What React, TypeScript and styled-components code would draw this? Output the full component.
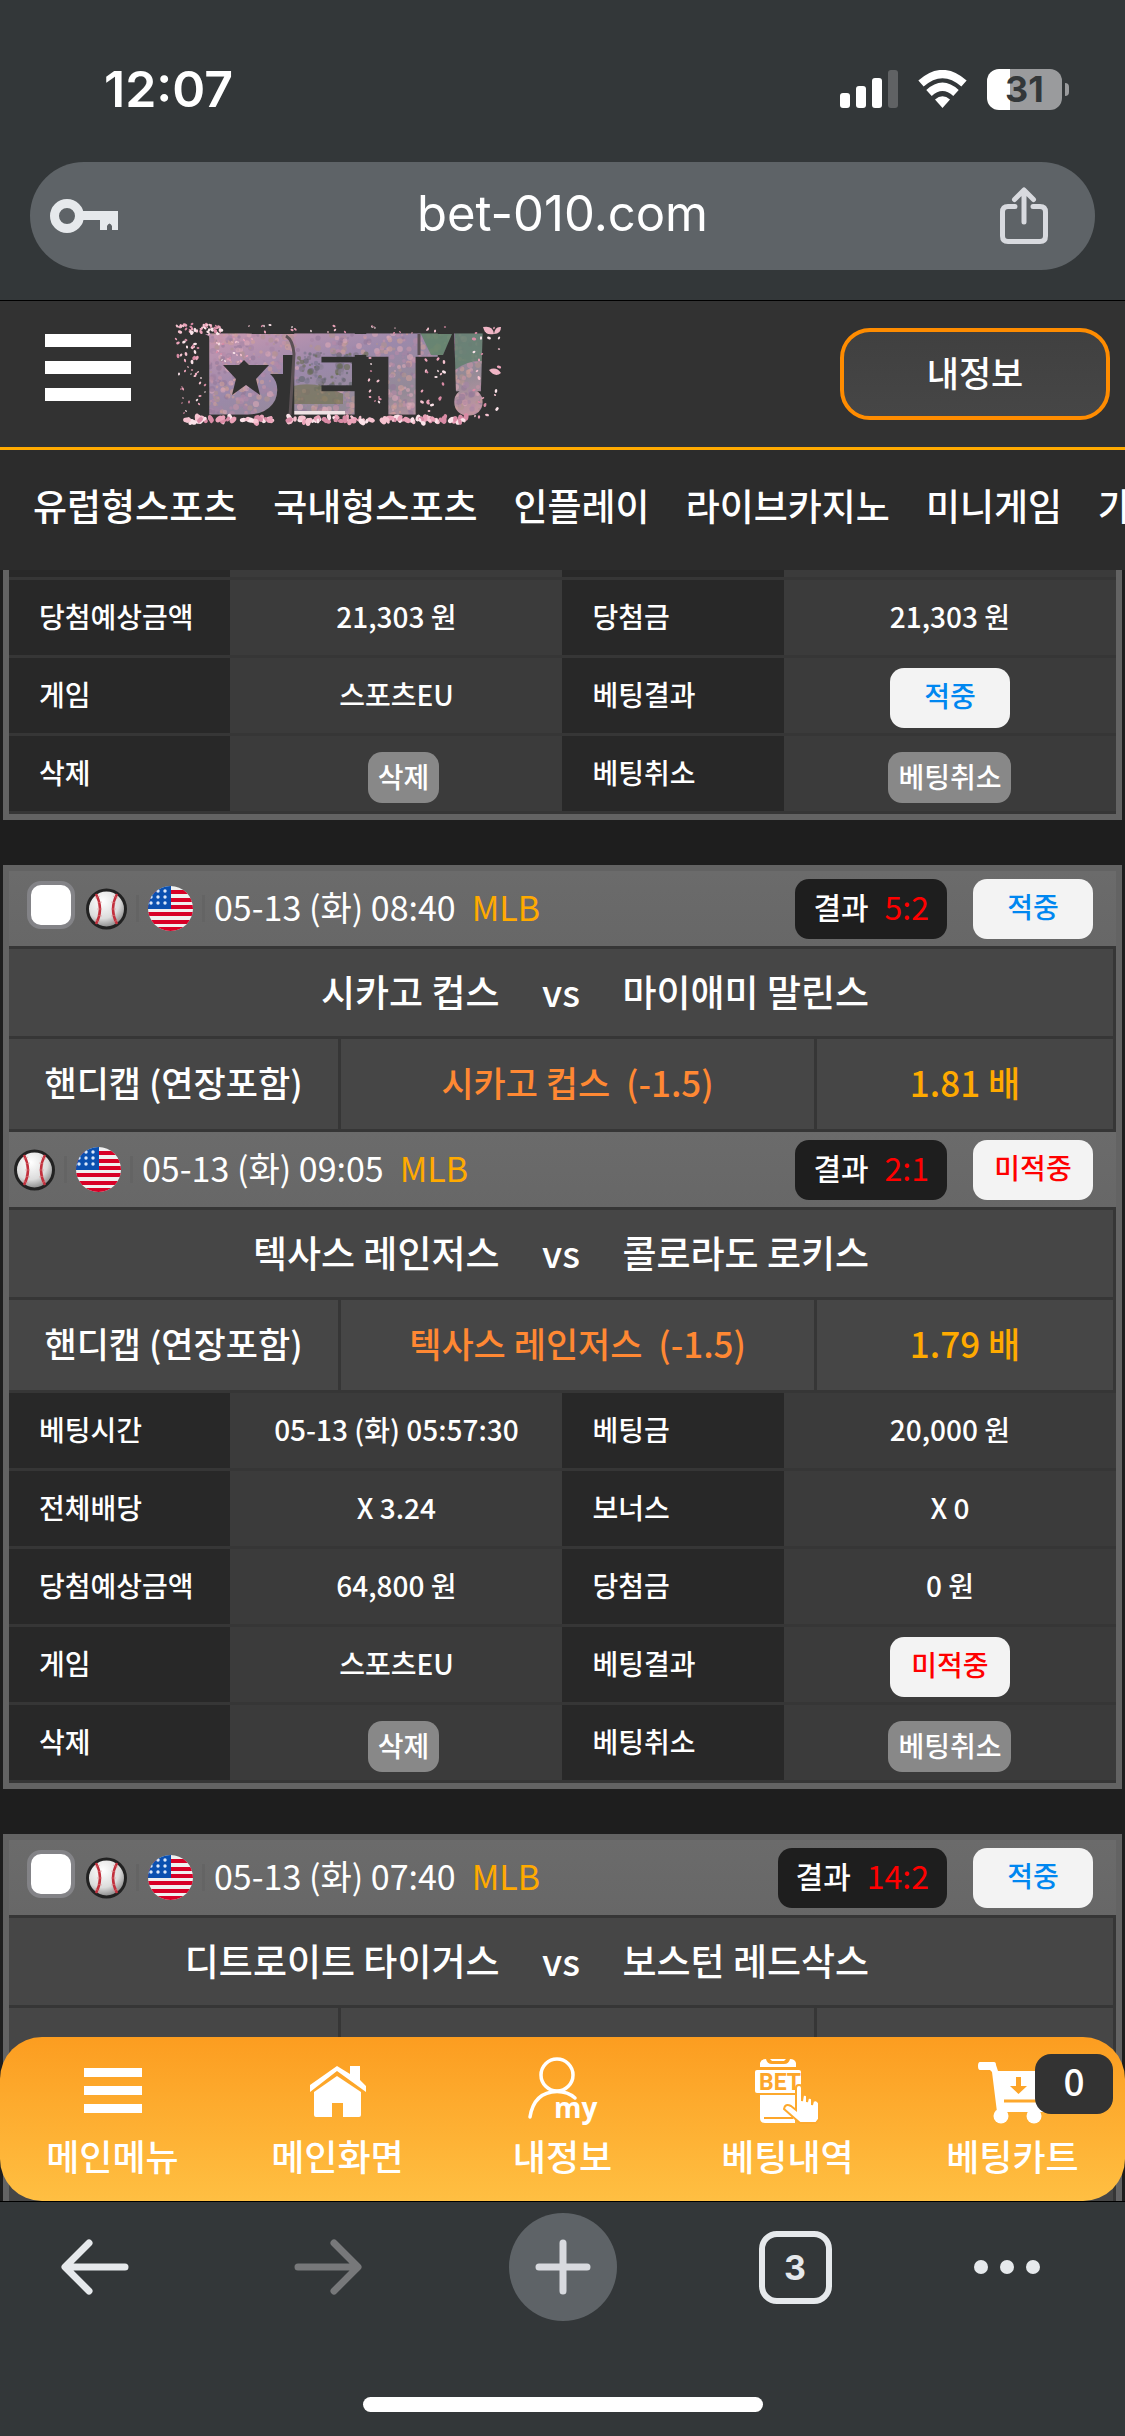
import React from "react";
import styled, { createGlobalStyle } from "styled-components";

const GlobalStyle = createGlobalStyle`
  *, *::before, *::after { box-sizing: border-box; }
  html, body, #root { height: 100%; }
  body {
    margin: 0;
    background: #333739;
    color: #fff;
    font-family: "Noto Sans CJK KR", sans-serif;
    font-weight: 500;
  }
  button, input { font: inherit; color: inherit; }
  button { padding: 0; border: 0; background: none; cursor: pointer; }
  a { color: inherit; text-decoration: none; }
  svg { display: block; flex: none; }
`;

/* ---------- frame ---------- */

const Screen = styled.div`
  display: flex;
  flex-direction: column;
  height: 100vh;
  min-height: 1200px;
  overflow: hidden;
  background: #1e1e1e;
`;

const BrowserTop = styled.header`
  flex: none;
  background: #333739;
  border-bottom: 1px solid #000;
  padding-bottom: 30px;
`;

const StatusBar = styled.div`
  display: flex;
  align-items: center;
  justify-content: space-between;
  height: 162px;
  padding: 16px 56px 0 104px;
  font-family: Inter, sans-serif;
`;

const Clock = styled.time`
  font-size: 50px;
  line-height: 60px;
  font-weight: 600;
`;

const StatusIcons = styled.div`
  display: flex;
  align-items: center;
  gap: 19px;
`;

const Battery = styled.div`
  display: flex;
  align-items: center;
  gap: 3px;
`;

const BatteryBody = styled.span`
  width: 75px;
  height: 41px;
  border-radius: 12px;
  background: linear-gradient(90deg, #fff 31%, #9a9b9d 31%);
  color: #333739;
  font-size: 36px;
  line-height: 41px;
  font-weight: 700;
  text-align: center;
`;

const BatteryNub = styled.span`
  width: 4px;
  height: 13px;
  border-radius: 0 4px 4px 0;
  background: #9a9b9d;
`;

const AddressBar = styled.div`
  display: grid;
  grid-template-columns: 84px 1fr 84px;
  align-items: center;
  height: 108px;
  margin: 0 30px;
  padding: 0 18px;
  border-radius: 54px;
  background: #5e6367;
`;

const AddressInput = styled.input`
  width: 100%;
  padding: 0 0 4px;
  border: 0;
  outline: 0;
  background: none;
  font-family: Inter, sans-serif;
  font-size: 49px;
  line-height: 60px;
  font-weight: 400;
  text-align: center;
`;

const ShareButton = styled.button`
  justify-self: start;
  padding-left: 6px;
`;

const Page = styled.div`
  position: relative;
  flex: 1;
  min-height: 0;
  overflow: hidden;
  display: flex;
  flex-direction: column;
`;

/* ---------- site header ---------- */

const SiteHeader = styled.div`
  flex: none;
  display: flex;
  align-items: center;
  height: 149px;
  padding: 0 15px 0 45px;
  background: #323232;
  border-bottom: 3px solid #ffaa00;
`;

const HeaderMenuButton = styled.button`
  padding-bottom: 14px;
`;

const LogoLink = styled.a`
  margin-left: 34px;
`;

const InfoButton = styled.button`
  width: 270px;
  height: 92px;
  margin-left: auto;
  padding-bottom: 4px;
  border: 4px solid #ff8c00;
  border-radius: 30px;
  background: linear-gradient(#404040, #464646);
  font-size: 35px;
  line-height: 40px;
`;

const NavBar = styled.nav`
  flex: none;
  display: flex;
  align-items: center;
  gap: 36px;
  height: 120px;
  padding: 0 0 10px 33px;
  overflow: hidden;
  background: #2c2c2c;
  font-size: 37px;
  line-height: 48px;
  white-space: nowrap;
`;

/* ---------- bet cards ---------- */

const CardList = styled.main`
  flex: 1;
  min-height: 0;
  display: flex;
  flex-direction: column;
  gap: 45px;
  padding: 0 3px;
  overflow: hidden;
`;

const Card = styled.article<{ $cut?: boolean }>`
  flex: none;
  border: 6px solid #636363;
  border-top-width: ${(p) => (p.$cut ? 0 : 6)}px;
  background: #464646;
`;

const GameHead = styled.div<{ $select?: boolean }>`
  display: flex;
  align-items: center;
  height: 78px;
  padding: 0 23px 0 ${(p) => (p.$select ? 18 : 5)}px;
  border-bottom: 3px solid #363636;
  background: linear-gradient(#6b6b6b, #676767);
  font-size: 34px;
  line-height: 48px;
`;

const SelectBox = styled.input`
  appearance: none;
  width: 48px;
  height: 48px;
  margin: 0 11px 8px 0;
  border: 4px solid #838387;
  border-radius: 14px;
  background: #fff;
`;

const Separator = styled.span`
  width: 3px;
  height: 27px;
  margin: 0 9px;
  background: #646464;
`;

const StartTime = styled.time`
  padding-bottom: 4px;
  font-weight: 400;
`;

const League = styled.span`
  margin-left: 16px;
  padding-bottom: 4px;
  color: #ffaa00;
  font-weight: 400;
`;

const Score = styled.span`
  display: flex;
  gap: 16px;
  height: 60px;
  margin-left: auto;
  padding: 3px 18px 0;
  border-radius: 14px;
  background: #1e1e1e;
  font-size: 30px;
`;

const ScoreValue = styled.strong`
  color: #ff0000;
  font-size: 32px;
  font-weight: 400;
`;

const Result = styled.span<{ $won: boolean }>`
  display: inline-block;
  width: 120px;
  height: 60px;
  border-radius: 14px;
  background: #f3f3f3;
  color: ${(p) => (p.$won ? "#0087f0" : "#ff0000")};
  font-size: 28px;
  line-height: 55px;
  text-align: center;
  vertical-align: middle;

  ${Score} + & { margin-left: 26px; }
`;

const Teams = styled.div`
  display: grid;
  grid-template-columns: 1fr 123px 1fr;
  align-items: center;
  height: 90px;
  padding-bottom: 4px;
  border-right: 3px solid #363636;
  border-bottom: 3px solid #363636;
  font-size: 37px;
  line-height: 48px;
  text-align: center;
`;

const Home = styled.span`
  text-align: right;
`;

const Away = styled.span`
  text-align: left;
`;

const PickRow = styled.div`
  display: grid;
  grid-template-columns: 30% 43% 27%;
  height: 93px;
  border-bottom: 3px solid #363636;
  font-size: 35px;
  line-height: 86px;
  text-align: center;
  white-space: nowrap;
`;

const PickCell = styled.div<{ $color?: string }>`
  border-right: 3px solid #363636;
  color: ${(p) => p.$color ?? "#fff"};
`;

const OpenRow = styled(PickRow)`
  height: 220px;
`;

const Details = styled.table`
  width: 100%;
  table-layout: fixed;
  border-collapse: separate;
  border-spacing: 0;
  background: #3b3b3b;
  font-size: 28px;
  line-height: 36px;

  tr { height: 78px; }
  tr.cut { height: 10px; }
  th, td {
    padding: 0 0 4px;
    border-bottom: 3px solid #363636;
  }
  tr.cut > * { padding: 0; }
  th {
    width: 20%;
    padding-left: 30px;
    background: #282828;
    font-weight: 500;
    text-align: left;
  }
  td { text-align: center; }
  td:has(> span), td:has(> button) { padding: 0; line-height: 60px; }
`;

const SmallButton = styled.button<{ $shift?: boolean }>`
  height: 51px;
  margin-left: ${(p) => (p.$shift ? 14 : 0)}px;
  padding: 0 10px 4px;
  border-radius: 14px;
  background: #888;
  line-height: 40px;
  vertical-align: middle;
`;

/* ---------- bottom bars ---------- */

const BottomMenu = styled.nav`
  position: absolute;
  inset: auto 0 0 0;
  display: grid;
  grid-template-columns: repeat(5, 1fr);
  height: 164px;
  border-radius: 42px;
  background: linear-gradient(#fc9d20, #ffbf42);
`;

const MenuLink = styled.a`
  position: relative;
  display: flex;
  flex-direction: column;
  align-items: center;
  gap: 2px;
  padding-top: 18px;
  font-size: 36px;
  line-height: 48px;
`;

const CartCount = styled.span`
  position: absolute;
  top: 17px;
  right: 12px;
  width: 78px;
  height: 60px;
  border-radius: 16px;
  background: #333;
  font-size: 37px;
  line-height: 52px;
  text-align: center;
`;

const BrowserBottom = styled.footer`
  flex: none;
  height: 235px;
  border-top: 1px solid #000;
  background: #333739;
  display: flex;
  flex-direction: column;
  justify-content: space-between;
  align-items: center;
  padding: 11px 0 24px;
`;

const Tools = styled.div`
  display: grid;
  grid-template-columns: 190fr 276fr 194fr 270fr 154fr 41fr;
  align-items: center;
  justify-items: center;
  width: 100%;
`;

const PlusButton = styled.button`
  display: grid;
  place-items: center;
  width: 108px;
  height: 108px;
  border-radius: 50%;
  background: #5e6367;
`;

const TabsButton = styled.button`
  width: 73px;
  height: 73px;
  border: 6px solid #e6e9ec;
  border-radius: 18px;
  color: #e6e9ec;
  font-family: Inter, sans-serif;
  font-size: 34px;
  line-height: 61px;
  font-weight: 700;
`;

const HomeBar = styled.span`
  width: 400px;
  height: 15px;
  border-radius: 8px;
  background: #fff;
`;

/* ---------- drawings ---------- */

const SignalIcon = () => (
  <svg width="58" height="38" viewBox="0 0 58 38" fill="#fff" aria-hidden="true">
    <rect x="0" y="23" width="10" height="15" rx="3" />
    <rect x="16" y="16" width="10" height="22" rx="3" />
    <rect x="32" y="8" width="10" height="30" rx="3" />
    <rect x="48" y="0" width="10" height="38" rx="3" fill="#606264" />
  </svg>
);

const WifiIcon = () => (
  <svg width="51" height="38" viewBox="0 0 51 38" aria-hidden="true">
    <path d="M4 13.500Q25.500-5.500 47 13.500" fill="none" stroke="#fff" strokeWidth="8" />
    <path d="M12 23Q25.500 10.500 39 23" fill="none" stroke="#fff" strokeWidth="8" />
    <path d="M18 29.500Q25.500 23 33 29.500L25.500 38Z" fill="#fff" />
  </svg>
);

const KeyIcon = () => (
  <svg width="72" height="36" viewBox="0 0 72 36" aria-hidden="true">
    <circle cx="19" cy="18" r="12.500" fill="none" stroke="#e6e9ec" strokeWidth="9" />
    <path d="M34 13H70V32H64V28Q61.500 23 59 28V32H52V22H34Z" fill="#e6e9ec" />
  </svg>
);

const ShareIcon = () => (
  <svg width="50" height="58" viewBox="0 0 50 58" fill="none" stroke="#d8dadf" strokeWidth="5" strokeLinecap="round" strokeLinejoin="round" aria-hidden="true">
    <path d="M16 19.500H9Q3.500 19.500 3.500 25V49Q3.500 54.500 9 54.500H41Q46.500 54.500 46.500 49V25Q46.500 19.500 41 19.500H34" />
    <path d="M25 35V4M15.500 12.500L25 3L34.500 12.500" />
  </svg>
);

const HeaderMenuIcon = () => (
  <svg width="86" height="67" viewBox="0 0 86 67" fill="#fff" aria-hidden="true">
    <rect width="86" height="13" />
    <rect y="27" width="86" height="13" />
    <rect y="54" width="86" height="13" />
  </svg>
);

const makeRandom = (seed: number) => () => {
  seed = (seed * 16807) % 2147483647;
  return seed / 2147483647;
};

const rnd = makeRandom(4213);
const pinks = ["#f6c3d0", "#eba3b9", "#fbe3e9", "#d98ba5"];
const scatter = (n: number, x: number, y: number, w: number, h: number, r: number) =>
  Array.from({ length: n }, (_, i) => ({
    x: Math.round(x + rnd() * w),
    y: Math.round(y + rnd() * h),
    r: Math.round((r * 0.5 + rnd() * r * 0.5) * 10) / 10,
    a: Math.round(rnd() * 180),
    c: pinks[i % 4],
  }));

const petals = [
  ...scatter(46, 10, 10, 48, 10, 2.4),
  ...scatter(20, 10, 22, 26, 28, 2.3),
  ...scatter(24, 12, 50, 30, 50, 1.6),
  ...scatter(26, 50, 22, 40, 26, 1.5),
  ...scatter(26, 75, 11, 220, 8, 1.7),
  ...scatter(12, 204, 40, 12, 52, 1.8),
  ...scatter(18, 256, 40, 26, 58, 2.2),
  ...scatter(24, 308, 12, 26, 92, 2.2),
  ...scatter(46, 22, 103, 86, 5, 4),
  ...scatter(44, 122, 103, 86, 5, 4),
  ...scatter(44, 218, 103, 86, 5, 4),
];

const blossomTones = ["#b58aa8", "#c795a6", "#a585a5", "#dba9b6", "#b3958f", "#957a9a", "#cfa09a"];
const woodTones = ["#62636b", "#77748a", "#5f666a", "#666b4e", "#8b8094", "#7a7280"];
const texture = Array.from({ length: 1100 }, (_, i) => {
  const x = Math.round(36 + rnd() * 290);
  const y = Math.round(18 + rnd() * 84);
  const dark = x > 132 && x < 205 && y > 38 && y < 76;
  return { x, y, r: Math.round(8 + rnd() * 24) / 10, c: dark ? woodTones[i % 6] : blossomTones[i % 7] };
});

const Logo = () => (
  <svg width="345" height="120" viewBox="0 0 345 120" role="img" aria-label="BET!">
    <defs>
      <linearGradient id="dusk" x1="0" x2="1" y1="0" y2="1">
        <stop offset="0" stopColor="#cf9bb2" />
        <stop offset="0.4" stopColor="#9c89ab" />
        <stop offset="0.7" stopColor="#938a96" />
        <stop offset="1" stopColor="#cf99a6" />
      </linearGradient>
      <mask id="letters" maskUnits="userSpaceOnUse" x="0" y="0" width="345" height="120">
        <g fill="#fff" stroke="#fff" strokeWidth="7">
          <text x="43 128 202 284" y="97" fontFamily="Inter, sans-serif" fontWeight="900" fontSize="102">BET!</text>
        </g>
        <path d="M40 20H287L278 41H118V60H60V36Q52 26 40 20ZM62 36H100V86H62Z" fill="#fff" />
      </mask>
    </defs>
    <g mask="url(#letters)">
      <rect x="30" y="16" width="300" height="88" fill="url(#dusk)" />
      {texture.map((t, i) => (
        <circle key={i} cx={t.x} cy={t.y} r={t.r} fill={t.c} opacity="0.6" />
      ))}
      <path d="M254 16H290L278 41H266Z" fill="#5f8468" opacity="0.85" />
      <path d="M290 16H325V48Q305 44 290 56Z" fill="#5f7f6c" opacity="0.8" />
      <path d="M128 72Q150 66 178 80V90H128Z" fill="#6e7048" opacity="0.6" />
      <path d="M126 97H180V101H126Z" fill="#eee2e4" />
      <path d="M254 20V41" stroke="#5b5155" strokeWidth="3" />
    </g>
    <path d="M79 46L84 51H104L91 65L95 81L81 71L67 81L71 65L58 51H74Z" fill="#323232" />
    <path d="M121 22Q128 26 129 40L125 101" fill="none" stroke="#5b5155" strokeWidth="3" />
    {petals.map((p, i) => (
      <ellipse key={i} cx={p.x} cy={p.y} rx={p.r} ry={p.r * 0.65} fill={p.c} transform={`rotate(${p.a} ${p.x} ${p.y})`} />
    ))}
    <path d="M318 13Q328 11 329 20Q320 22 318 13ZM329 20Q330 12 336 13Q336 20 329 20ZM324 56Q331 52 336 59Q330 64 324 56Z" fill="#f0b5c5" />
  </svg>
);

const Baseball = () => (
  <svg width="41" height="45" viewBox="0 0 41 45" aria-hidden="true">
    <defs>
      <radialGradient id="leather" cx="0.4" cy="0.3" r="0.75">
        <stop offset="0" stopColor="#fff" />
        <stop offset="0.6" stopColor="#dcdcdc" />
        <stop offset="1" stopColor="#777" />
      </radialGradient>
    </defs>
    <circle cx="20.500" cy="23" r="19" fill="url(#leather)" stroke="#222" strokeWidth="3" />
    <path d="M10 8Q18 23 10 38M31 8Q23 23 31 38" fill="none" stroke="#c2303d" strokeWidth="2.500" />
    <path d="M9 12L14 10M11 17L16 16M11 23H16M11 29L16 30M9 34L14 36M32 12L27 10M30 17L25 16M30 23H25M30 29L25 30M32 34L27 36" stroke="#d88" strokeWidth="1" opacity="0.5" />
  </svg>
);

const UsFlag = () => (
  <svg width="45" height="45" viewBox="0 0 45 45" role="img" aria-label="USA">
    <defs>
      <clipPath id="disc">
        <circle cx="22.500" cy="22.500" r="22.500" />
      </clipPath>
    </defs>
    <g clipPath="url(#disc)">
      <rect width="45" height="45" fill="#f0f0f0" />
      {[4, 12, 19, 26, 34, 41].map((y) => (
        <rect key={y} y={y} width="45" height="4" fill="#d80027" />
      ))}
      <rect width="23" height="23" fill="#0b50b0" />
      {[5, 11, 17].map((y) =>
        [3, 10, 17].map((x) => <circle key={`${x}-${y}`} cx={x} cy={y} r="1.700" fill="#dce8fa" />)
      )}
    </g>
  </svg>
);

const HomeIcon = () => (
  <svg width="56" height="74" viewBox="0 0 56 74" fill="#fff" aria-hidden="true">
    <path d="M0 30L27 11L40 19V11H50V25L56 31V37L27 16L0 37Z" />
    <path d="M4 37L27 21L51 37V60Q51 62 49 62H33V48H22V62H6Q4 62 4 60Z" />
  </svg>
);

const BarsIcon = () => (
  <svg width="58" height="74" viewBox="0 0 58 74" fill="#fff" aria-hidden="true">
    <rect y="13" width="58" height="9" />
    <rect y="31" width="58" height="9" />
    <rect y="49" width="58" height="9" />
  </svg>
);

const MyIcon = () => (
  <svg width="74" height="74" viewBox="0 0 74 74" aria-hidden="true">
    <g fill="none" stroke="#fff" strokeWidth="3.500" strokeLinecap="round">
      <ellipse cx="31" cy="20" rx="16" ry="16" />
      <path d="M4 62Q8 37 31 36.500Q42 36.500 49 43" />
    </g>
    <text x="28" y="63" fill="#fff" fontFamily="Open Sans, sans-serif" fontSize="28" fontWeight="700">my</text>
  </svg>
);

const BetSlipIcon = () => (
  <svg width="66" height="74" viewBox="0 0 66 74" aria-hidden="true">
    <path d="M5 12V8Q6 4 11 4Q12 9 17 9H29Q34 9 35 4Q40 4 41 8V12Z" fill="#fff" />
    <path d="M15 4H31L29 6H17Z" fill="#fff" />
    <rect y="15" width="46" height="23" rx="2" fill="#fff" />
    <text x="4" y="35" fill="#fda62a" fontFamily="Roboto, sans-serif" fontSize="23" fontWeight="700">BET</text>
    <path d="M5 40H40V68H10Q5 68 5 63Z" fill="#fff" />
    <path d="M9 63H38" stroke="#fda62a" strokeWidth="2" />
    <path d="M41 33Q41 30 44 30Q47 30 47 33V46L48 40Q51 39 52 41V47L53 43Q56 42 57 44V50L58 46Q62 44 64 48V64L61 68H45Q38 62 29 54Q30 48 36 51L41 55Z" fill="#fff" stroke="#fda92d" strokeWidth="2" />
  </svg>
);

const CartIcon = () => (
  <svg width="74" height="74" viewBox="0 0 74 74" fill="#fff" aria-hidden="true">
    <path d="M4 7H18Q20 7 20 10L22 16H72L66 45H70V57H21L16 17L14 15H4Q2 15 2 11Q2 7 4 7Z" />
    <circle cx="25" cy="61" r="7.500" />
    <circle cx="58" cy="61" r="7.500" />
    <path d="M28 46H70" stroke="#fda82c" strokeWidth="3" />
    <path d="M40 22H45V31H51L42.500 39L34 31H40Z" fill="#fca428" />
  </svg>
);

const ArrowIcon = ({ forward }: { forward?: boolean }) => (
  <svg width="68" height="56" viewBox="0 0 68 56" fill="none" stroke={forward ? "#77787a" : "#e6e9ec"} strokeWidth="7" strokeLinecap="round" strokeLinejoin="round" aria-hidden="true">
    <path d={forward ? "M4 28H63M40 4L64 28L40 52" : "M64 28H5M28 4L4 28L28 52"} />
  </svg>
);

const PlusIcon = () => (
  <svg width="56" height="56" viewBox="0 0 56 56" stroke="#d8dadf" strokeWidth="7" strokeLinecap="round" aria-hidden="true">
    <path d="M28 4V52M4 28H52" />
  </svg>
);

const DotsIcon = () => (
  <svg width="68" height="16" viewBox="0 0 68 16" fill="#e6e9ec" aria-hidden="true">
    <circle cx="8" cy="8" r="7" />
    <circle cx="34" cy="8" r="7" />
    <circle cx="60" cy="8" r="7" />
  </svg>
);

/* ---------- data ---------- */

type Game = {
  time: string;
  score: string;
  won: boolean;
  home: string;
  away: string;
  odds?: string;
};

const firstBet: Game[] = [
  { time: "05-13 (화) 08:40", score: "5:2", won: true, home: "시카고 컵스", away: "마이애미 말린스", odds: "1.81 배" },
  { time: "05-13 (화) 09:05", score: "2:1", won: false, home: "텍사스 레인저스", away: "콜로라도 로키스", odds: "1.79 배" },
];

const secondBet: Game[] = [
  { time: "05-13 (화) 07:40", score: "14:2", won: true, home: "디트로이트 타이거스", away: "보스턴 레드삭스" },
];

const navItems = ["유럽형스포츠", "국내형스포츠", "인플레이", "라이브카지노", "미니게임", "가"];

const GameBlock = ({ game, selectable }: { game: Game; selectable?: boolean }) => (
  <section>
    <GameHead $select={selectable}>
      {selectable && <SelectBox type="checkbox" aria-label={`${game.home} vs ${game.away}`} />}
      <Baseball />
      <Separator />
      <UsFlag />
      <Separator />
      <StartTime>{game.time}</StartTime>
      <League>MLB</League>
      <Score>
        결과 <ScoreValue>{game.score}</ScoreValue>
      </Score>
      <Result $won={game.won}>{game.won ? "적중" : "미적중"}</Result>
    </GameHead>
    <Teams>
      <Home>{game.home}</Home>
      <span>vs</span>
      <Away>{game.away}</Away>
    </Teams>
    {game.odds ? (
      <PickRow>
        <PickCell>핸디캡 (연장포함)</PickCell>
        <PickCell $color="#ff8833">{game.home}&nbsp; (-1.5)</PickCell>
        <PickCell $color="#ffaa00">{game.odds}</PickCell>
      </PickRow>
    ) : (
      <OpenRow>
        <PickCell />
        <PickCell />
        <PickCell />
      </OpenRow>
    )}
  </section>
);

type Row = [string, React.ReactNode, string, React.ReactNode];

const Column = styled.col<{ $share: number }>`
  width: ${(p) => p.$share}%;
`;

const DetailTable = ({ rows, cut }: { rows: Row[]; cut?: boolean }) => (
  <Details>
    <colgroup>
      <Column $share={20} />
      <Column $share={30} />
      <Column $share={20} />
      <Column $share={30} />
    </colgroup>
    <tbody>
      {cut && (
        <tr className="cut" aria-hidden="true">
          <th /><td /><th /><td />
        </tr>
      )}
      {rows.map(([a, av, b, bv]) => (
        <tr key={a}>
          <th scope="row">{a}</th>
          <td>{av}</td>
          <th scope="row">{b}</th>
          <td>{bv}</td>
        </tr>
      ))}
    </tbody>
  </Details>
);

const closingRows = (expected: string, paid: string, won: boolean): Row[] => [
  ["당첨예상금액", expected, "당첨금", paid],
  ["게임", "스포츠EU", "베팅결과", <Result $won={won}>{won ? "적중" : "미적중"}</Result>],
  [
    "삭제",
    <SmallButton $shift type="button">삭제</SmallButton>,
    "베팅취소",
    <SmallButton type="button">베팅취소</SmallButton>,
  ],
];

export default function App() {
  return (
    <Screen>
      <GlobalStyle />
      <BrowserTop>
        <StatusBar>
          <Clock>12:07</Clock>
          <StatusIcons>
            <SignalIcon />
            <WifiIcon />
            <Battery>
              <BatteryBody>31</BatteryBody>
              <BatteryNub />
            </Battery>
          </StatusIcons>
        </StatusBar>
        <AddressBar>
          <KeyIcon />
          <AddressInput aria-label="Address" defaultValue="bet-010.com" />
          <ShareButton type="button" aria-label="Share">
            <ShareIcon />
          </ShareButton>
        </AddressBar>
      </BrowserTop>

      <Page>
        <SiteHeader>
          <HeaderMenuButton type="button" aria-label="메뉴">
            <HeaderMenuIcon />
          </HeaderMenuButton>
          <LogoLink href="#">
            <Logo />
          </LogoLink>
          <InfoButton type="button">내정보</InfoButton>
        </SiteHeader>
        <NavBar>
          {navItems.map((n) => (
            <a key={n} href="#">{n}</a>
          ))}
        </NavBar>

        <CardList>
          <Card $cut>
            <DetailTable cut rows={closingRows("21,303 원", "21,303 원", true)} />
          </Card>
          <Card>
            {firstBet.map((g, i) => (
              <GameBlock key={g.time} game={g} selectable={i === 0} />
            ))}
            <DetailTable
              rows={[
                ["베팅시간", "05-13 (화) 05:57:30", "베팅금", "20,000 원"],
                ["전체배당", "X 3.24", "보너스", "X 0"],
                ...closingRows("64,800 원", "0 원", false),
              ]}
            />
          </Card>
          <Card>
            {secondBet.map((g) => (
              <GameBlock key={g.time} game={g} selectable />
            ))}
          </Card>
        </CardList>

        <BottomMenu>
          <MenuLink href="#"><BarsIcon />메인메뉴</MenuLink>
          <MenuLink href="#"><HomeIcon />메인화면</MenuLink>
          <MenuLink href="#"><MyIcon />내정보</MenuLink>
          <MenuLink href="#"><BetSlipIcon />베팅내역</MenuLink>
          <MenuLink href="#">
            <CartIcon />베팅카트
            <CartCount>0</CartCount>
          </MenuLink>
        </BottomMenu>
      </Page>

      <BrowserBottom>
        <Tools>
          <button type="button" aria-label="Back"><ArrowIcon /></button>
          <button type="button" aria-label="Forward"><ArrowIcon forward /></button>
          <PlusButton type="button" aria-label="New tab"><PlusIcon /></PlusButton>
          <TabsButton type="button">3</TabsButton>
          <button type="button" aria-label="More"><DotsIcon /></button>
        </Tools>
        <HomeBar />
      </BrowserBottom>
    </Screen>
  );
}
